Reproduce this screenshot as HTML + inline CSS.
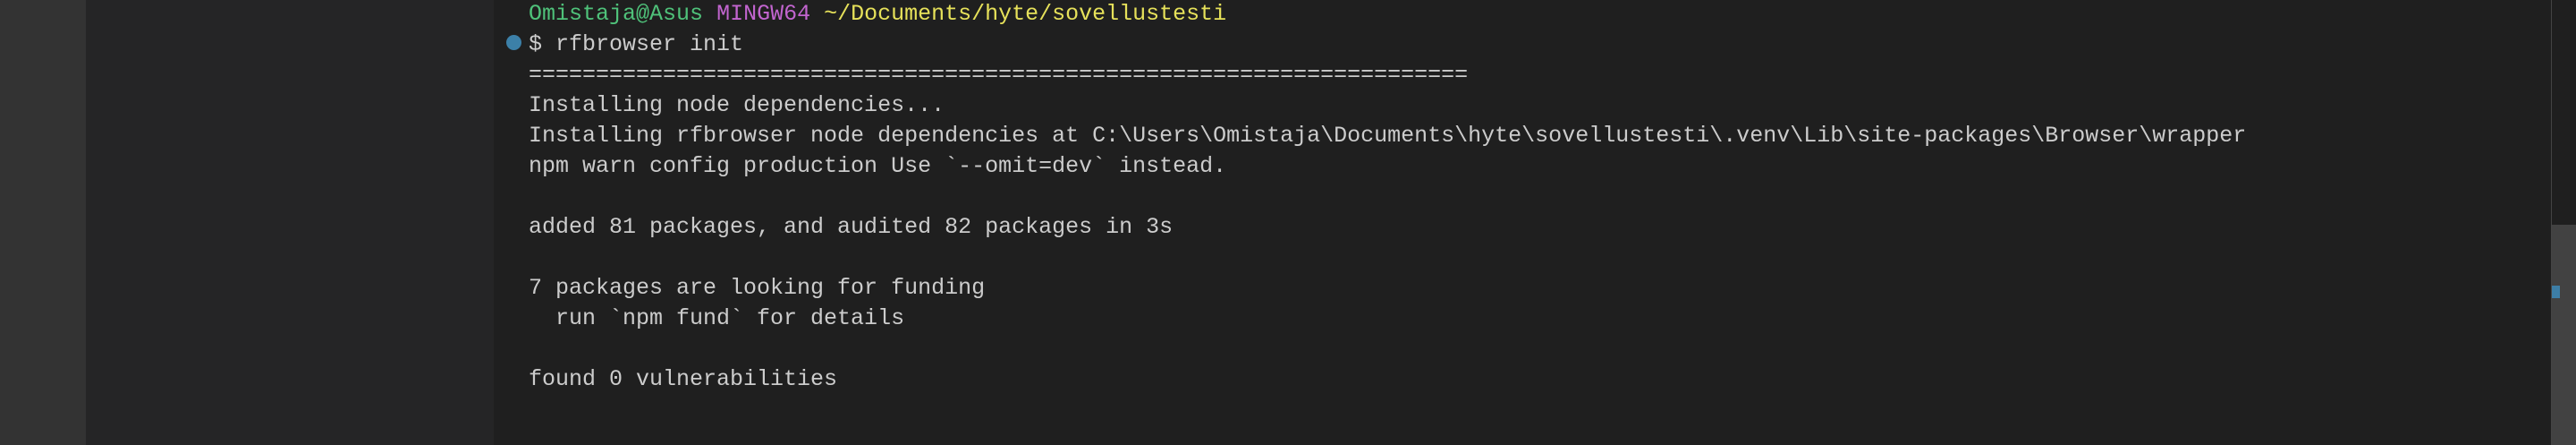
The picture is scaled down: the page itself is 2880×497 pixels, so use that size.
<!DOCTYPE html>
<html><head><meta charset="utf-8"><style>
html,body{margin:0;padding:0;width:2880px;height:497px;overflow:hidden;background:#1f1f1f;}
.a{position:absolute;left:0;top:0;width:96px;height:497px;background:#333333;}
.b{position:absolute;left:96px;top:0;width:456px;height:497px;background:#252526;}
.t{position:absolute;left:591px;top:-1px;font-family:"Liberation Mono",monospace;font-size:25px;line-height:34px;color:#cccccc;white-space:pre;}
.g{color:#4fc27a}.m{color:#c265cf}.y{color:#e6e15a}
.dot{position:absolute;left:566px;top:39px;width:17px;height:17px;border-radius:50%;background:#3c80a8;}
.sep{position:absolute;left:2852px;top:0;width:1px;height:497px;background:#444;}
.thumb{position:absolute;left:2853px;top:251px;width:27px;height:246px;background:#424242;}
.mk{position:absolute;left:2853px;top:319px;width:9px;height:14px;background:#3d7ea6;}
</style></head><body>
<div class="a"></div><div class="b"></div>
<div class="dot"></div>
<div class="t"><span class="g">Omistaja@Asus</span> <span class="m">MINGW64</span> <span class="y">~/Documents/hyte/sovellustesti</span>
$ rfbrowser init
======================================================================
Installing node dependencies...
Installing rfbrowser node dependencies at C:\Users\Omistaja\Documents\hyte\sovellustesti\.venv\Lib\site-packages\Browser\wrapper
npm warn config production Use `--omit=dev` instead.

added 81 packages, and audited 82 packages in 3s

7 packages are looking for funding
  run `npm fund` for details

found 0 vulnerabilities</div>
<div class="sep"></div><div class="thumb"></div><div class="mk"></div>
</body></html>
